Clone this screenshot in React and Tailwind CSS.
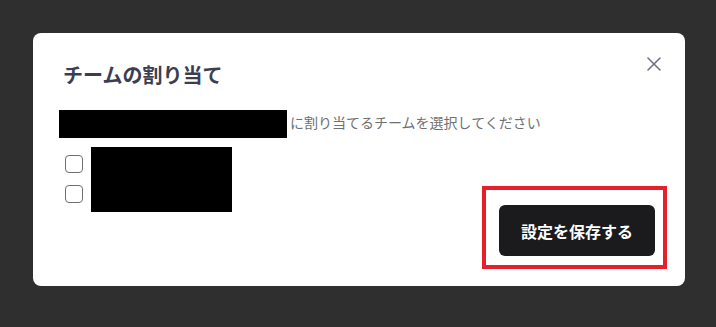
import { X } from 'lucide-react';

// Dialogue « チームの割り当て » : choix des équipes pour un membre.
export default function App() {
  return (
    <div
      className="min-h-[327px] w-full bg-[#2f2f2f] p-[33px]"
      style={{ fontFamily: '"Noto Sans CJK JP", "Noto Sans", sans-serif' }}
    >
      <div className="relative flex h-[253px] w-[652px] flex-col rounded-lg bg-white pl-[26px] pr-[30px] pt-[28px] pb-[30px]">
        <button
          type="button"
          aria-label="閉じる"
          className="absolute right-[19px] top-[19px] text-[#6b6e80]"
        >
          <X size={24} strokeWidth={1.5} />
        </button>

        <h2 className="pl-[4px] text-[20px] font-bold leading-[28px] text-[#3b3e51]">
          チームの割り当て
        </h2>

        <div className="mt-[21px] flex h-[28px] items-center">
          <span className="h-[28px] w-[228px] bg-black" />
          <span className="mb-[4px] ml-[3px] text-[14px] leading-[20px] text-[#707070]">
            に割り当てるチームを選択してください
          </span>
        </div>

        <div className="mt-[9px] flex flex-1 justify-between">
          <div className="flex self-start">
            <div className="flex flex-col gap-[12px] pl-[6px] pt-[8px]">
              <input
                type="checkbox"
                className="h-[18px] w-[18px] appearance-none rounded-[4px] border border-[#6f6f6f] bg-white"
              />
              <input
                type="checkbox"
                className="h-[18px] w-[18px] appearance-none rounded-[4px] border border-[#6f6f6f] bg-white"
              />
            </div>
            <span className="ml-[8px] h-[65px] w-[141px] bg-black" />
          </div>

          <div className="relative self-end">
            <button
              type="button"
              className="h-[51px] w-[156px] rounded-md bg-[#1b1b1d] text-[16px] font-bold text-white"
            >
              設定を保存する
            </button>
            <span className="pointer-events-none absolute -left-[17px] -top-[19px] -right-[12px] -bottom-[13px] border-4 border-[#e5202a]" />
          </div>
        </div>
      </div>
    </div>
  );
}
